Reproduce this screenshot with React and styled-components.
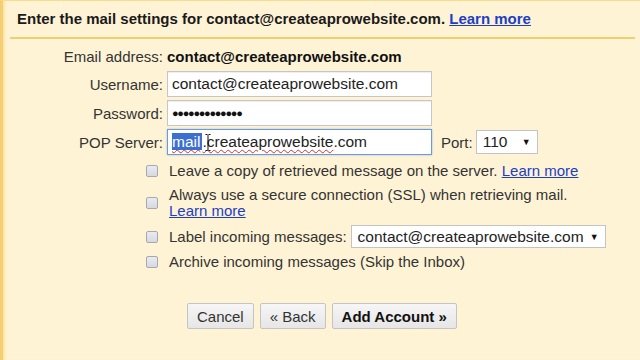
import React from "react";
import styled, { createGlobalStyle } from "styled-components";

const GlobalStyle = createGlobalStyle`
  html, body {
    margin: 0;
    padding: 0;
    background: #fff3d6;
  }
  body {
    font-family: "Liberation Sans", Arial, sans-serif;
    color: #222;
  }
`;

const Page = styled.div`
  width: 640px;
  height: 360px;
  box-sizing: border-box;
  background: #fff3d6;
  border-left: 3px solid #f3cf72;
  border-top: 1px solid #f6dc8e;
  box-shadow: inset 4px 0 3px -2px #f9e3a6;
  overflow: hidden;
`;

const Header = styled.div`
  margin: 0 5px 0 7px;
  padding: 9px 0 0 7px;
  height: 27px;
  border-bottom: 2px solid #f0d06e;
  font-size: 15px;
  font-weight: bold;
  line-height: 18px;
  color: #1a1a1a;
  white-space: nowrap;
`;

const Link = styled.a`
  color: #1c3fc4;
  text-decoration: underline;
`;

const Form = styled.div`
  display: grid;
  grid-template-columns: 160px auto;
  column-gap: 4px;
  row-gap: 3px;
  padding-top: 6px;
  font-size: 15px;
`;

const Label = styled.div`
  color: #333;
  display: flex;
  align-items: center;
  justify-content: flex-end;
  height: ${(p) => p.h || 26}px;
`;

const Cell = styled.div`
  display: flex;
  align-items: center;
  height: ${(p) => p.h || 26}px;
`;

const Value = styled.span`
  font-weight: bold;
  color: #111;
`;

const Field = styled.div`
  position: relative;
  box-sizing: border-box;
  width: 265px;
  height: 26px;
  background: #fff;
  border: 1px solid ${(p) => (p.focused ? "#6e9bd8" : "#c6c6c6")};
  box-shadow: ${(p) => (p.focused ? "0 0 2px #9bbbe6" : "inset 0 1px 1px #eee")};
  padding: 0 4px;
  display: flex;
  align-items: center;
  font-size: 15.5px;
  color: #222;
  white-space: nowrap;
`;

const Dots = styled.span`
  font-size: 11px;
  letter-spacing: -1.3px;
  color: #111;
`;

const Squiggle = styled.span`
  text-decoration: underline wavy #d23030;
  text-decoration-thickness: 1px;
  text-underline-offset: 2px;
`;

const Selected = styled.span`
  background: #3b6fd1;
  color: #fff;
  padding-right: 2px;
`;

const Cursor = styled.svg`
  position: absolute;
  left: 37px;
  top: 4px;
`;

const PortLabel = styled.span`
  margin: 0 3px 0 9px;
  color: #333;
`;

const Select = styled.div`
  box-sizing: border-box;
  width: ${(p) => p.w}px;
  height: ${(p) => p.h || 24}px;
  background: #fff;
  border: 1px solid #c3c3c3;
  display: flex;
  align-items: center;
  justify-content: space-between;
  padding: 0 6px;
  font-size: 15.5px;
  color: #222;
  white-space: nowrap;
  margin: ${(p) => p.m || "0"};
`;

const Arrow = styled.span`
  font-size: 9px;
  color: #111;
`;

const Checks = styled.div`
  display: flex;
  flex-direction: column;
  gap: 8px;
  margin: 8px 0 0 143px;
  font-size: 15px;
  line-height: 16px;
  color: #333;
`;

const CheckRow = styled.div`
  display: flex;
  align-items: center;
  height: ${(p) => (p.h ? p.h + "px" : "auto")};
`;

const Box = styled.span`
  flex: none;
  box-sizing: border-box;
  width: 12px;
  height: 12px;
  border: 1px solid #a5a8b0;
  border-radius: 2px;
  background: linear-gradient(#e9ebf1, #d6d9e2);
  margin-right: 11px;
`;

const Buttons = styled.div`
  display: flex;
  gap: 6px;
  margin: 33px 0 0 184px;
`;

const Button = styled.button`
  box-sizing: border-box;
  height: 26px;
  padding: 0 9px;
  font-family: "Liberation Sans", Arial, sans-serif;
  font-size: 15px;
  font-weight: ${(p) => (p.primary ? "bold" : "normal")};
  color: ${(p) => (p.primary ? "#111" : "#333")};
  background: linear-gradient(#f6f6f6, #e6e6e6);
  border: 1px solid #c4c4c4;
  border-radius: 2px;
`;

export default function App() {
  return (
    <>
      <GlobalStyle />
      <Page>
        <Header>
          Enter the mail settings for contact@createaprowebsite.com.{" "}
          <Link>Learn more</Link>
        </Header>
        <Form>
          <Label h={23}>Email address:</Label>
          <Cell h={23}>
            <Value>contact@createaprowebsite.com</Value>
          </Cell>
          <Label>Username:</Label>
          <Cell>
            <Field>contact@createaprowebsite.com</Field>
          </Cell>
          <Label>Password:</Label>
          <Cell>
            <Field>
              <Dots>●●●●●●●●●●●●●</Dots>
            </Field>
          </Cell>
          <Label>POP Server:</Label>
          <Cell>
            <Field focused>
              <Squiggle>
                <Selected>mail</Selected>.createaprowebsite
              </Squiggle>
              .com
              <Cursor width="6" height="17" viewBox="0 0 6 17">
                <path d="M0.5 0.5h2M3.5 0.5h2M3 1v15M0.5 16.5h2M3.5 16.5h2" stroke="#111" strokeWidth="1" fill="none" />
              </Cursor>
            </Field>
            <PortLabel>Port:</PortLabel>
            <Select w={62} h={24}>
              110 <Arrow>▼</Arrow>
            </Select>
          </Cell>
        </Form>
        <Checks>
          <CheckRow>
            <Box />
            <span>
              Leave a copy of retrieved message on the server.{" "}
              <Link>Learn more</Link>
            </span>
          </CheckRow>
          <CheckRow>
            <Box />
            <span>
              Always use a secure connection (SSL) when retrieving mail.
              <br />
              <Link>Learn more</Link>
            </span>
          </CheckRow>
          <CheckRow h={19}>
            <Box />
            <span>Label incoming messages:</span>
            <Select w={255} h={23} m="0 0 0 4px">
              contact@createaprowebsite.com <Arrow>▼</Arrow>
            </Select>
          </CheckRow>
          <CheckRow>
            <Box />
            <span>Archive incoming messages (Skip the Inbox)</span>
          </CheckRow>
        </Checks>
        <Buttons>
          <Button>Cancel</Button>
          <Button>« Back</Button>
          <Button primary>Add Account »</Button>
        </Buttons>
      </Page>
    </>
  );
}
